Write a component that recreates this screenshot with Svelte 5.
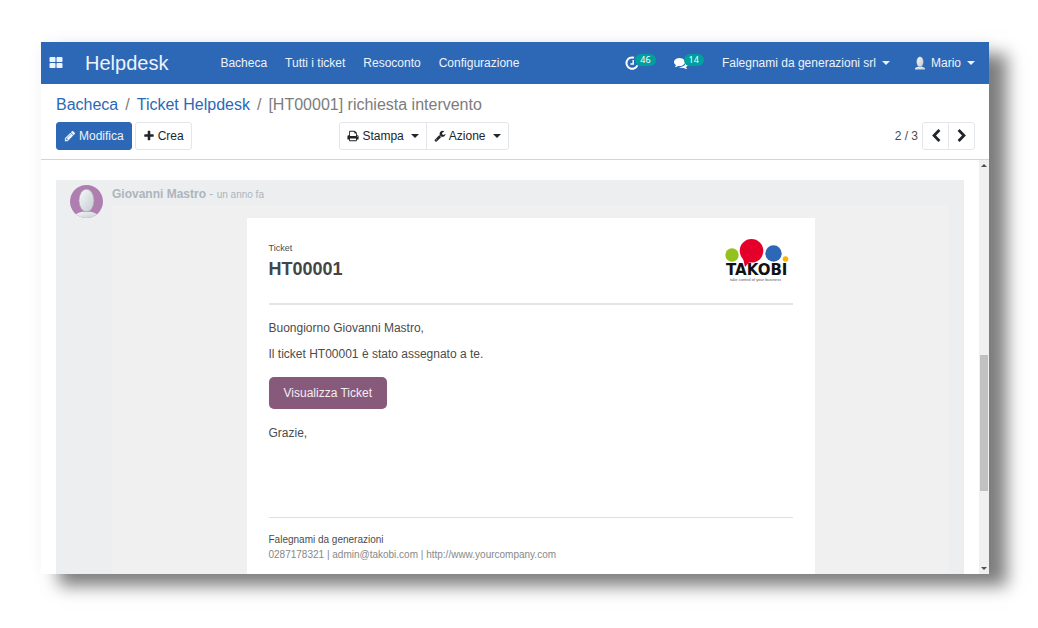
<script lang="ts">
    const menu = ['Bacheca', 'Tutti i ticket', 'Resoconto', 'Configurazione'];

    // visible part of the page, in percent of the scroll track
    const scroll = { before: 47, size: 34 };

    const icons = {
        apps: 'M832 1024v384q0 52-38 90t-90 38h-512q-52 0-90-38t-38-90v-384q0-52 38-90t90-38h512q52 0 90 38t38 90zm0-768v384q0 52-38 90t-90 38h-512q-52 0-90-38t-38-90v-384q0-52 38-90t90-38h512q52 0 90 38t38 90zm896 768v384q0 52-38 90t-90 38h-512q-52 0-90-38t-38-90v-384q0-52 38-90t90-38h512q52 0 90 38t38 90zm0-768v384q0 52-38 90t-90 38h-512q-52 0-90-38t-38-90v-384q0-52 38-90t90-38h512q52 0 90 38t38 90z',
        pencil: 'M491 1536l91-91-235-235-91 91v107h128v128h107zm523-928q0-22-22-22-10 0-17 7l-542 542q-7 7-7 17 0 22 22 22 10 0 17-7l542-542q7-7 7-17zm-54-192l416 416-832 832h-416v-416zm683 96q0 53-37 90l-166 166-416-416 166-165q36-38 90-38 53 0 91 38l235 234q37 39 37 91z',
        plus: 'M1600 736v192q0 40-28 68t-68 28h-416v416q0 40-28 68t-68 28h-192q-40 0-68-28t-28-68v-416h-416q-40 0-68-28t-28-68v-192q0-40 28-68t68-28h416v-416q0-40 28-68t68-28h192q40 0 68 28t28 68v416h416q40 0 68 28t28 68z',
        print: 'M448 1536h896v-256h-896v256zm0-640h896v-384h-160q-40 0-68-28t-28-68v-160h-640v640zm1152 64q0-26-19-45t-45-19-45 19-19 45 19 45 45 19 45-19 19-45zm128 0v416q0 13-9.5 22.5t-22.5 9.5h-224v160q0 40-28 68t-68 28h-960q-40 0-68-28t-28-68v-160h-224q-13 0-22.5-9.5t-9.5-22.5v-416q0-79 56.5-135.5t135.5-56.5h64v-544q0-40 28-68t68-28h672q40 0 88 20t76 48l152 152q28 28 48 76t20 88v256h64q79 0 135.5 56.5t56.5 135.5z',
        wrench: 'M448 1472q0-26-19-45t-45-19-45 19-19 45 19 45 45 19 45-19 19-45zm644-420l-682 682q-37 37-90 37-52 0-91-37l-106-108q-38-36-38-90 0-53 38-91l681-681q39 98 114.5 173.5t173.5 114.5zm634-435q0 39-23 106-47 134-164.5 217.5t-258.5 83.5q-185 0-316.5-131.5t-131.5-316.5 131.5-316.5 316.5-131.5q58 0 121.5 16.5t107.5 46.5q16 11 16 28t-16 28l-293 169v224l193 107q5-3 79-48.5t135.5-81 70.5-35.5q15 0 23.5 10t8.5 25z',
        prev: 'M1427 301l-531 531 531 531q19 19 19 45t-19 45l-166 166q-19 19-45 19t-45-19l-742-742q-19-19-19-45t19-45l742-742q19-19 45-19t45 19l166 166q19 19 19 45t-19 45z',
        next: 'M1363 877l-742 742q-19 19-45 19t-45-19l-166-166q-19-19-19-45t19-45l531-531-531-531q-19-19-19-45t19-45l166-166q19-19 45-19t45 19l742 742q19 19 19 45t-19 45z',
        comments: 'M1408 768q0 139-94 257t-256.5 186.5-353.5 68.5q-86 0-176-16-124 88-278 128-36 9-86 16h-3q-11 0-20.5-8t-11.5-21q-1-3-1-6.5t.5-6.5 2-6l2.5-5 3.5-5.5 4-5 4.5-5 4-4.5q5-6 23-25t26-29.5 22.5-29 25-38.5 20.5-44q-124-72-195-177t-71-224q0-139 94-257t256.5-186.5 353.5-68.5 353.5 68.5 256.5 186.5 94 257zm384 256q0 120-71 224.5t-195 176.5q10 24 20.5 44t25 38.5 22.5 29 26 29.5 23 25q1 1 4 4.5t4.5 5 4 5 3.5 5.5l2.5 5 2 6 .5 6.5-1 6.5q-3 14-13 22t-22 7q-50-7-86-16-154-40-278-128-90 16-176 16-271 0-472-132 58 4 88 4 161 0 309-45t264-129q125-92 192-212t67-254q0-77-23-152 129 71 204 178t71 230z'
    };
</script>

{#snippet icon(name: keyof typeof icons)}
    <svg class="icon" viewBox="0 0 1792 1792" aria-hidden="true"><path d={icons[name]} /></svg>
{/snippet}

{#snippet person()}
    <path d="M2 32 Q6 27 12 26 L20 26 Q26 27 30 32 Z" fill="url(#skin)" />
    <ellipse cx="16" cy="15" rx="7.3" ry="11" fill="url(#skin)" stroke="#9aa6b0" stroke-width="0.6" />
{/snippet}

<div class="window">
    <nav>
        <button class="apps" aria-label="Applicazioni">{@render icon('apps')}</button>
        <a class="brand" href="#helpdesk">Helpdesk</a>
        <div class="menu">
            {#each menu as item}
                <a href="#menu">{item}</a>
            {/each}
        </div>
        <div class="systray">
            <button class="counter" aria-label="Attività">
                <svg class="clock" viewBox="0 0 14 14" aria-hidden="true">
                    <path d="M9 1.7 A5.7 5.7 0 1 0 12.4 9.4" />
                    <path d="M8.2 4 V8 H5.4" />
                </svg>
                <span class="badge">46</span>
            </button>
            <button class="counter" aria-label="Conversazioni">
                {@render icon('comments')}
                <span class="badge">14</span>
            </button>
            <button class="company">Falegnami da generazioni srl <i class="caret"></i></button>
            <button class="user">
                <svg viewBox="5 3 22 29" aria-hidden="true">{@render person()}</svg>
                Mario <i class="caret"></i>
            </button>
        </div>
    </nav>

    <header>
        <div class="breadcrumb">
            <a href="#bacheca">Bacheca</a>
            <span>/</span>
            <a href="#tickets">Ticket Helpdesk</a>
            <span>/</span>
            <span>[HT00001] richiesta intervento</span>
        </div>
        <div class="controls">
            <div class="actions">
                <div class="buttons">
                    <button class="btn primary">{@render icon('pencil')} Modifica</button>
                    <button class="btn">{@render icon('plus')} Crea</button>
                </div>
                <div class="group">
                    <button class="btn">{@render icon('print')} Stampa <i class="caret"></i></button>
                    <button class="btn">{@render icon('wrench')} Azione <i class="caret"></i></button>
                </div>
            </div>
            <div class="pager">
                <span>2 / 3</span>
                <div class="group">
                    <button class="btn" aria-label="Precedente">{@render icon('prev')}</button>
                    <button class="btn" aria-label="Successivo">{@render icon('next')}</button>
                </div>
            </div>
        </div>
    </header>

    <main>
        <div class="thread">
            <svg class="avatar" viewBox="0 0 32 32" aria-hidden="true">
                <defs>
                    <linearGradient id="skin" x1="0" y1="0" x2="1" y2="1">
                        <stop offset="0" stop-color="#f8f9fa" />
                        <stop offset="1" stop-color="#c3cad0" />
                    </linearGradient>
                    <clipPath id="round"><circle cx="16" cy="16" r="16" /></clipPath>
                </defs>
                <g clip-path="url(#round)">
                    <rect width="32" height="32" fill="#b07db0" />
                    {@render person()}
                </g>
            </svg>
            <div class="message">
                <p class="author"><strong>Giovanni Mastro</strong> - <small>un anno fa</small></p>
                <div class="mail">
                    <article>
                        <div class="mail-head">
                            <div>
                                <div class="label">Ticket</div>
                                <h1>HT00001</h1>
                            </div>
                            <svg class="logo" viewBox="0 0 64 43" role="img" aria-label="Takobi">
                                <circle cx="7" cy="16" r="6.7" fill="#95c11f" />
                                <circle cx="26.5" cy="11.8" r="11.8" fill="#e4002b" />
                                <path d="M18 19 L20 28 L26 21 Z" fill="#e4002b" />
                                <circle cx="48.5" cy="14.5" r="8.2" fill="#2d68b6" />
                                <circle cx="60.5" cy="20" r="2.8" fill="#fbb200" />
                                <text class="logo-name" x="1" y="36">TAKOBI</text>
                                <text class="logo-claim" x="5" y="42">take control of your business</text>
                            </svg>
                        </div>
                        <div class="mail-body">
                            <p>Buongiorno Giovanni Mastro,</p>
                            <p>Il ticket HT00001 è stato assegnato a te.</p>
                            <a class="view" href="#ticket">Visualizza Ticket</a>
                            <p>Grazie,</p>
                        </div>
                        <footer>
                            <div>Falegnami da generazioni</div>
                            <div class="contacts">0287178321 | admin@takobi.com | http://www.yourcompany.com</div>
                        </footer>
                    </article>
                </div>
            </div>
        </div>
        <div class="scrollbar" aria-hidden="true">
            <i class="arrow up"></i>
            <div class="track">
                <div style="height: {scroll.before}%"></div>
                <div class="thumb" style="height: {scroll.size}%"></div>
            </div>
            <i class="arrow down"></i>
        </div>
    </main>
</div>

<style>
    :global(body) {
        margin: 0;
        background: #fff;
    }
    .window {
        margin: 42px 49px 54px 41px;
        background: #fff;
        color: #4c4c4c;
        font: 12px/18px "Liberation Sans", Arial, sans-serif;
        box-shadow: 18px 12px 16px rgba(0, 0, 0, 0.5), 0 0 16px rgba(0, 0, 0, 0.04);
    }
    a {
        color: #2d68b6;
        text-decoration: none;
    }
    p, h1 {
        margin: 0;
    }
    button {
        display: flex;
        align-items: center;
        border: 0;
        padding: 0;
        background: none;
        color: inherit;
        font: inherit;
        white-space: nowrap;
        cursor: pointer;
    }
    .icon {
        width: 12px;
        height: 12px;
        fill: currentColor;
    }
    .caret {
        border: 4px solid transparent;
        border-top-color: currentColor;
        border-bottom: 0;
    }

    nav {
        display: flex;
        align-items: center;
        height: 42px;
        padding: 0 14px 0 8px;
        background: #2d68b6;
        color: #eef3fa;
    }
    nav a {
        color: inherit;
    }
    .apps .icon {
        width: 14px;
        height: 14px;
    }
    .brand {
        margin-left: 22px;
        font-size: 20px;
    }
    .menu {
        display: flex;
        gap: 18px;
        margin-left: 52px;
        white-space: nowrap;
    }
    .systray {
        display: flex;
        align-items: center;
        margin-left: auto;
    }
    .counter {
        margin-right: 18px;
        color: #fff;
    }
    .counter .icon {
        width: 14px;
        height: 14px;
    }
    .clock {
        width: 14px;
        height: 14px;
        fill: none;
        stroke: #fff;
        stroke-width: 2;
    }
    .clock path + path {
        stroke-width: 1.4;
    }
    .badge {
        margin: 0 0 6px -4px;
        padding: 0 5px;
        border-radius: 6px;
        background: #00a09d;
        font: 9px/12px "Noto Sans", sans-serif;
    }
    .company .caret, .user .caret {
        margin-left: 6px;
    }
    .user {
        margin-left: 25px;
    }
    .user svg {
        width: 10px;
        height: 14px;
        margin-right: 6px;
    }

    header {
        padding: 10px 14px 9px 15px;
        border-bottom: 1px solid #d5d5d5;
    }
    .breadcrumb {
        display: flex;
        gap: 7px;
        color: #7c7c7c;
        font-size: 16px;
        line-height: 22px;
    }
    .controls {
        display: flex;
        margin-top: 6px;
    }
    .actions {
        display: flex;
        flex: 1;
        justify-content: space-between;
        padding-right: 14px;
    }
    .buttons {
        display: flex;
        gap: 3px;
    }
    .group {
        display: flex;
    }
    .btn {
        gap: 3px;
        height: 28px;
        padding: 0 7px;
        border: 1px solid #e3e6ea;
        border-radius: 3px;
        background: #fff;
        color: #212529;
    }
    .btn .caret {
        margin-left: 4px;
    }
    .primary {
        border-color: #2d68b6;
        background: #2d68b6;
        color: #eef3fa;
    }
    .group .btn:first-child {
        border-radius: 3px 0 0 3px;
    }
    .group .btn:last-child {
        margin-left: -1px;
        border-radius: 0 3px 3px 0;
    }
    .pager {
        display: flex;
        flex: 1;
        align-items: center;
        justify-content: flex-end;
        gap: 4px;
    }
    .pager .btn {
        justify-content: center;
        width: 27px;
        padding: 0;
    }
    .pager .icon {
        width: 14px;
        height: 14px;
    }

    main {
        display: flex;
    }
    .thread {
        display: flex;
        flex: 1;
        gap: 9px;
        margin: 20px 15px 0;
        padding: 0 15px 0 14px;
        background: #eceeef;
    }
    .avatar {
        flex: none;
        width: 33px;
        height: 33px;
        margin-top: 5px;
    }
    .message {
        flex: 1;
    }
    .author {
        padding: 5px 0 1px;
        color: #adb5bd;
    }
    .author small {
        font-size: 10px;
    }
    .mail {
        padding-top: 13px;
        background: #f0f0f0;
    }
    article {
        max-width: 524px;
        margin: 0 auto;
        padding: 21px 22px 12px;
        background: #fff;
    }
    .mail-head {
        display: flex;
        justify-content: space-between;
        padding-bottom: 21px;
        border-bottom: 2px solid #e5e5e5;
    }
    .label {
        font-size: 9px;
    }
    h1 {
        color: #454545;
        font-size: 18px;
        line-height: 24px;
    }
    .logo {
        width: 64px;
        height: 43px;
        margin-right: 4px;
    }
    .logo-name {
        fill: #111;
        font: bold 15px "DejaVu Sans", sans-serif;
    }
    .logo-claim {
        fill: #555;
        font: 4px "Liberation Sans", sans-serif;
    }
    .mail-body {
        padding: 14px 0 67px;
    }
    .mail-body p {
        margin-bottom: 8px;
    }
    .view {
        display: inline-block;
        margin: 6px 0 15px;
        padding: 7px 15px;
        border-radius: 5px;
        background: #875a7b;
        color: #f4eef2;
    }
    footer {
        padding-top: 14px;
        border-top: 1px solid #dedede;
        font-size: 10px;
        line-height: 15px;
    }
    .contacts {
        color: #888;
    }

    .scrollbar {
        display: flex;
        flex-direction: column;
        align-items: center;
        width: 10px;
        padding: 4px 0;
        background: #f0f0f0;
    }
    .track {
        flex: 1;
        width: 8px;
    }
    .thumb {
        background: #c1c1c1;
    }
    .arrow {
        border: 3px solid transparent;
    }
    .up {
        border-top: 0;
        border-bottom-color: #505050;
    }
    .down {
        border-bottom: 0;
        border-top-color: #505050;
    }
</style>
